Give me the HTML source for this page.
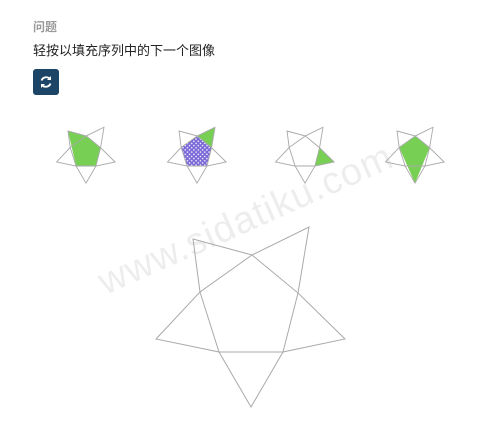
<!DOCTYPE html>
<html><head><meta charset="utf-8"><style>
body{margin:0;width:490px;height:425px;background:#fff;font-family:"Liberation Sans","Noto Sans CJK SC",sans-serif;overflow:hidden;position:relative}
.t1{position:absolute;left:33px;top:18px;font-size:12px;color:#999;font-weight:bold}
.t2{position:absolute;left:33px;top:40px;font-size:13px;color:#222}
.btn{position:absolute;left:33px;top:69px;width:26px;height:26px;background:#1c4467;border-radius:3px}
svg{position:absolute;left:0;top:0}
.wm{position:absolute;left:92px;top:265px;font-size:38px;color:rgba(0,0,0,0.07);transform:rotate(-24deg);transform-origin:left top;letter-spacing:1px}
</style></head><body>
<div class="t1">问题</div>
<div class="t2">轻按以填充序列中的下一个图像</div>
<div class="btn"><svg width="26" height="26" viewBox="0 0 26 26"><path d="M8.5 11.5 A5 5 0 0 1 17 10" fill="none" stroke="#fff" stroke-width="1.8"/><path d="M17.5 14.5 A5 5 0 0 1 9 16" fill="none" stroke="#fff" stroke-width="1.8"/><path d="M18 7 L18 11 L14 11Z" fill="#fff"/><path d="M8 19 L8 15 L12 15Z" fill="#fff"/></svg></div>
<div class="wm">www.sidatiku.com</div>
<svg width="490" height="425" viewBox="0 0 490 425">
<defs>
<g id="st" fill="none" stroke="#aaa">
<polygon points="-58,-71 1,-55 58,-83 47,-17 94,29 32,42 0,97 -32,42 -95,29 -51,-18"/>
<polygon points="1,-55 47,-17 32,42 -32,42 -51,-18"/>
</g>
<pattern id="dots" width="14" height="14" patternUnits="userSpaceOnUse"><rect width="14" height="14" fill="#7b68d8"/><circle cx="4" cy="4" r="2.6" fill="#fff"/><circle cx="11" cy="11" r="2.6" fill="#fff"/></pattern>
</defs>
<g transform="translate(86,153) scale(0.31)" stroke-width="3">
<polygon points="-58,-71 1,-55 47,-17 32,42 -32,42" fill="#77d054"/>
<use href="#st"/></g>
<g transform="translate(197,153) scale(0.31)" stroke-width="3">
<polygon points="1,-55 47,-17 32,42 -32,42 -51,-18" fill="url(#dots)"/>
<polygon points="1,-55 58,-83 47,-17" fill="#77d054"/>
<use href="#st"/></g>
<g transform="translate(305,153) scale(0.31)" stroke-width="3">
<polygon points="47,-17 94,29 32,42" fill="#77d054"/>
<use href="#st"/></g>
<g transform="translate(415,153) scale(0.31)" stroke-width="3">
<polygon points="1,-55 47,-17 0,97 -51,-18" fill="#77d054"/>
<use href="#st"/></g>
<g transform="translate(251,310)" stroke-width="1"><use href="#st"/></g>
</svg>
</body></html>
